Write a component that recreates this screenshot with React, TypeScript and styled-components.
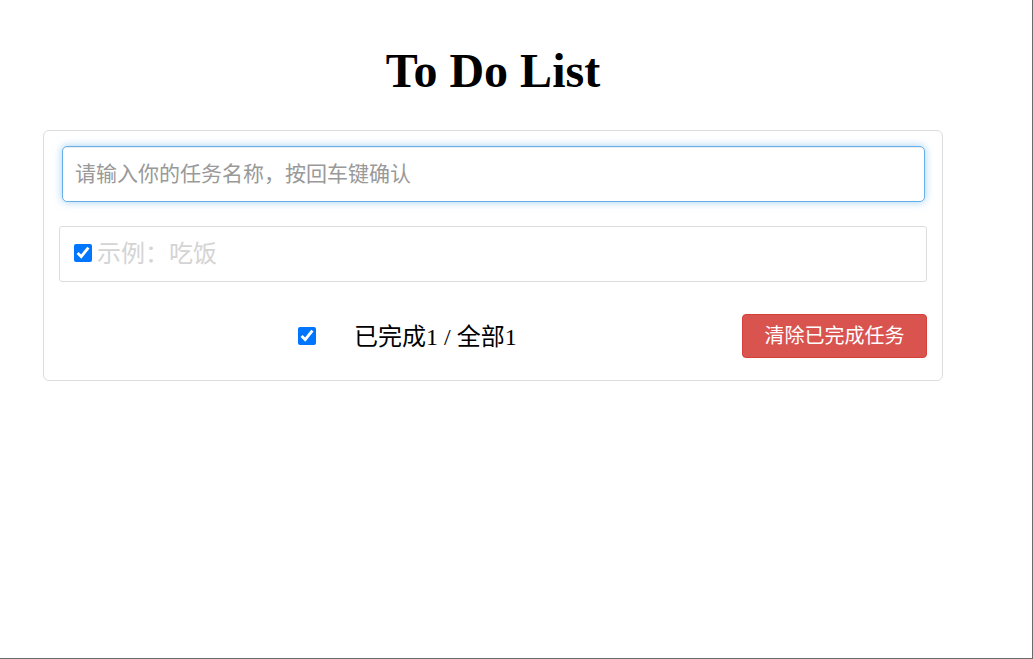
import React, { useState } from "react";
import styled, { createGlobalStyle } from "styled-components";

const GlobalStyle = createGlobalStyle`
  html, body { margin: 0; padding: 0; background: #fff; }
  body { font-family: "Liberation Serif", "Noto Sans CJK SC", serif; }
  * { box-sizing: border-box; }
`;

const Frame = styled.div`
  width: 1033px;
  height: 659px;
  border-right: 1px solid #6b6b6b;
  border-bottom: 1px solid #6b6b6b;
  padding: 43px 0 0 43px;
  overflow: hidden;
`;

const Wrap = styled.div`
  width: 900px;
`;

const Title = styled.h1`
  margin: 0 0 31px;
  font-family: "Liberation Serif", serif;
  font-weight: bold;
  font-size: 48px;
  line-height: 56px;
  text-align: center;
  color: #000;
`;

const Card = styled.div`
  border: 1px solid #ddd;
  border-radius: 6px;
  padding: 15px 15px 22px;
  display: flex;
  flex-direction: column;
`;

const TaskInput = styled.input`
  margin: 0 2px 0 3px;
  height: 56px;
  border: 1px solid #66afe9;
  border-radius: 5px;
  box-shadow: inset 0 1px 1px rgba(0, 0, 0, 0.075), 0 0 8px rgba(102, 175, 233, 0.6);
  padding: 0 12px 4px;
  font-family: "Noto Sans CJK SC", sans-serif;
  font-size: 21px;
  color: #555;
  outline: none;
  background: #fff;
  &::placeholder { color: #999; }
`;

const List = styled.ul`
  list-style: none;
  margin: 24px 0 0;
  padding: 0;
`;

const Item = styled.li`
  height: 56px;
  border: 1px solid #ddd;
  border-radius: 3px;
  display: flex;
  align-items: center;
  padding: 0 14px 3px;
`;

const Check = styled.input`
  width: 18px;
  height: 18px;
  margin: 0;
  accent-color: #0075ff;
  flex: none;
`;

const ItemText = styled.span<{ $done: boolean }>`
  margin: 0 0 3px 5px;
  font-family: "Noto Sans CJK SC", sans-serif;
  font-size: 24px;
  color: ${(p) => (p.$done ? "#d4d4d4" : "#333")};
`;

const Footer = styled.div`
  margin-top: 32px;
  height: 44px;
  display: flex;
  align-items: center;
`;

const FooterCheck = styled(Check)`
  margin-left: 239px;
`;

const Summary = styled.span`
  margin: 0 0 4px 38px;
  font-family: "Liberation Serif", "Noto Sans CJK SC", serif;
  font-size: 24px;
  color: #000;
`;

const ClearButton = styled.button`
  margin-left: auto;
  width: 185px;
  height: 44px;
  background: #d9534f;
  border: 1px solid #d43f3a;
  border-radius: 4px;
  color: #fff;
  font-family: "Noto Sans CJK SC", sans-serif;
  font-size: 20px;
  padding: 0 0 3px;
  cursor: pointer;
`;

export default function App() {
  const [todos, setTodos] = useState([{ id: 1, name: "示例：吃饭", done: true }]);
  const doneCount = todos.filter((t) => t.done).length;
  return (
    <Frame>
      <GlobalStyle />
      <Wrap>
        <Title>To Do List</Title>
        <Card>
          <TaskInput autoFocus placeholder="请输入你的任务名称，按回车键确认" />
          <List>
            {todos.map((t) => (
              <Item key={t.id}>
                <Check
                  type="checkbox"
                  checked={t.done}
                  onChange={() =>
                    setTodos(todos.map((x) => (x.id === t.id ? { ...x, done: !x.done } : x)))
                  }
                />
                <ItemText $done={t.done}>{t.name}</ItemText>
              </Item>
            ))}
          </List>
          <Footer>
            <FooterCheck
              type="checkbox"
              checked={doneCount === todos.length && todos.length > 0}
              onChange={(e) => setTodos(todos.map((x) => ({ ...x, done: e.target.checked })))}
            />
            <Summary>
              已完成{doneCount} / 全部{todos.length}
            </Summary>
            <ClearButton onClick={() => setTodos(todos.filter((t) => !t.done))}>
              清除已完成任务
            </ClearButton>
          </Footer>
        </Card>
      </Wrap>
    </Frame>
  );
}
